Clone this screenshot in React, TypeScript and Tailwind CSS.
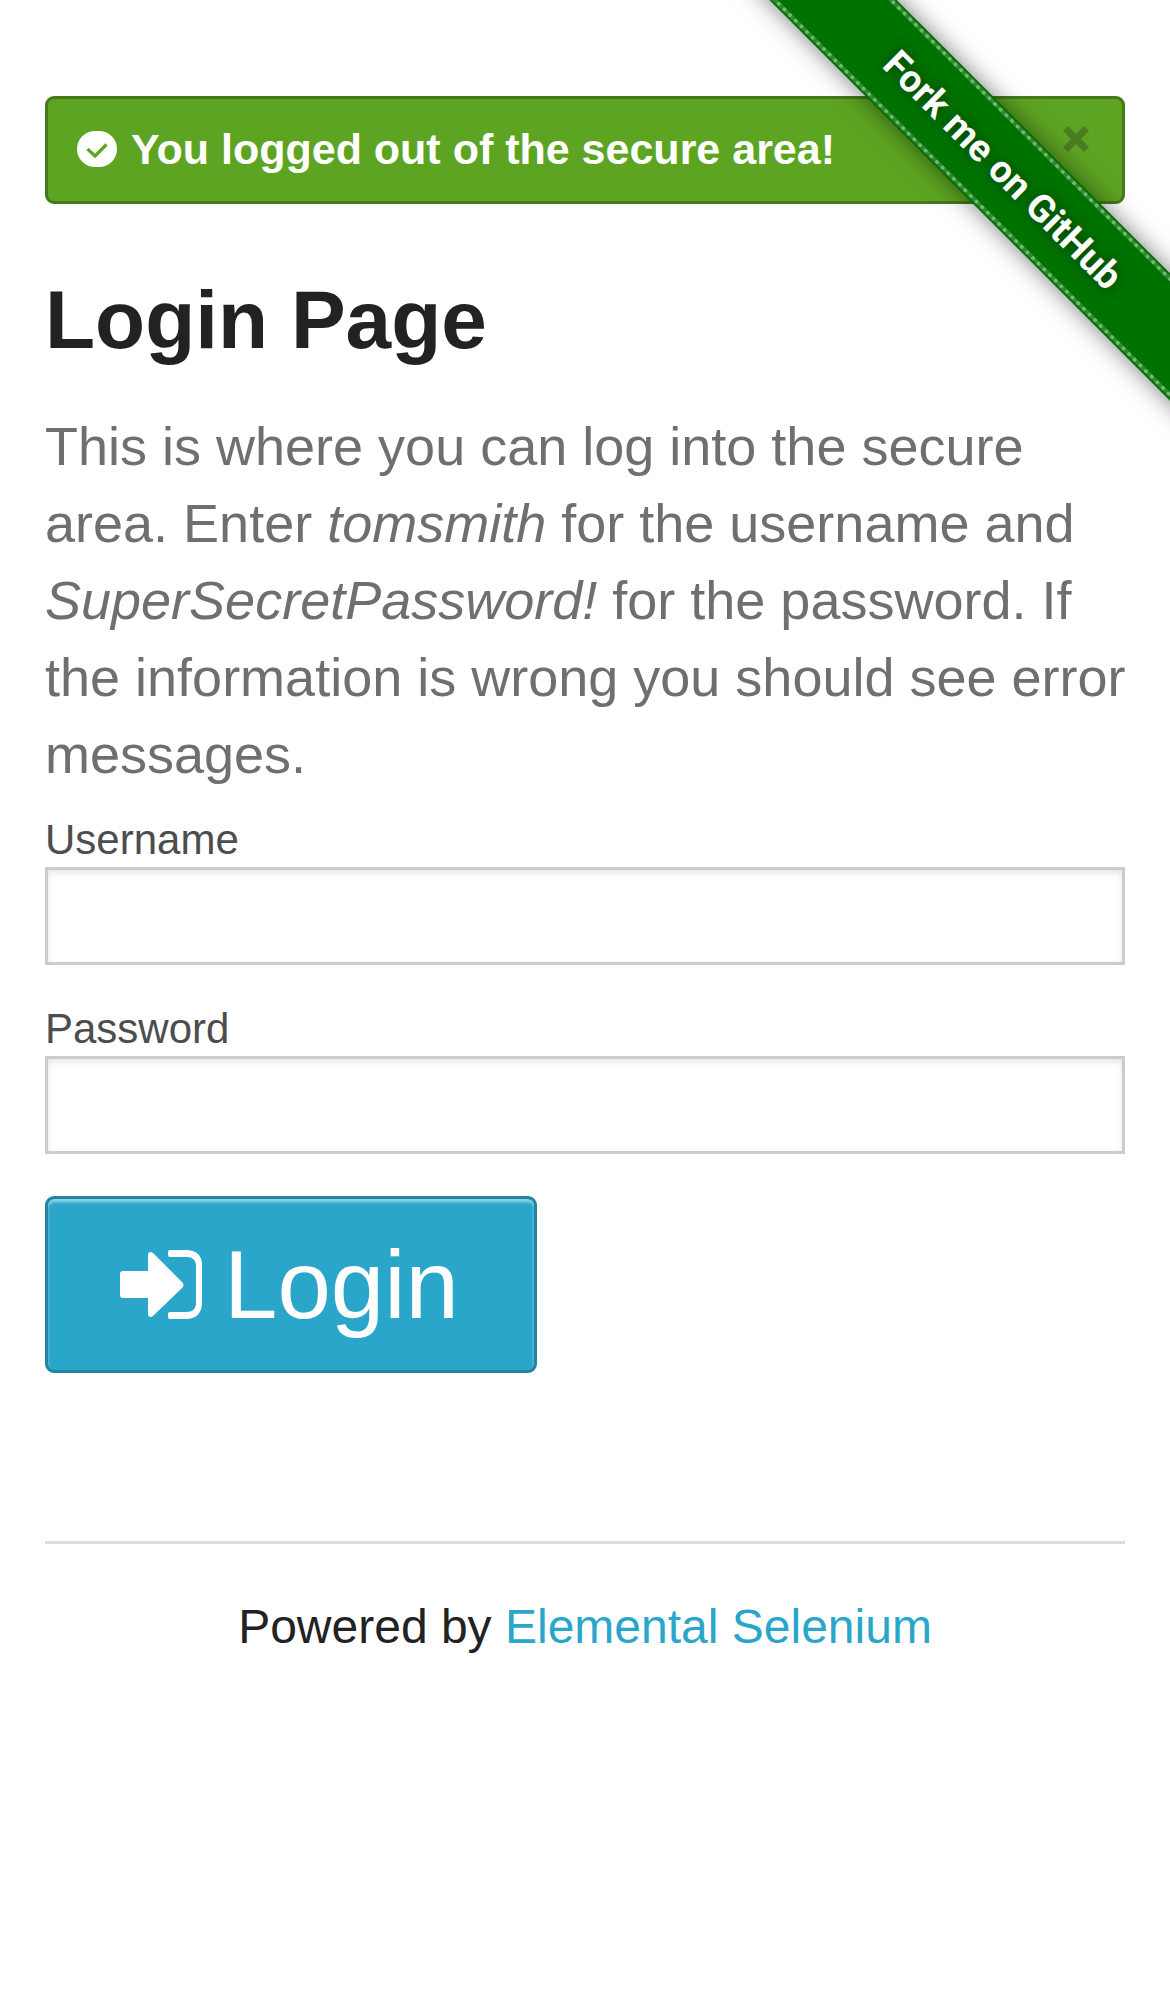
function Ribbon() {
  return (
    <div className="pointer-events-none absolute top-0 right-0 z-10 size-[447px] overflow-hidden">
      <a
        href="https://github.com/tourdedave/the-internet"
        className="pointer-events-auto absolute top-[125px] -right-[143px] flex h-[90px] w-[620px] rotate-45 items-center bg-[#007200] py-[2px] shadow-[0_0_24px_rgba(0,0,0,0.5)]"
      >
        <span className="block h-full w-full border-y-4 border-dotted border-[#74b474] bg-[#2d8a2d]">
          <span className="flex h-full w-full items-center justify-center bg-[#007200] bg-clip-padding font-[Roboto,sans-serif] text-[38px] font-bold text-white [text-shadow:0_0_12px_rgba(0,0,0,0.5)]">
            Fork me on GitHub
          </span>
        </span>
      </a>
    </div>
  );
}

function CheckIcon() {
  return (
    <svg viewBox="0 0 40 36" className="mr-[14px] h-9 w-10" aria-hidden="true">
      <rect width="40" height="36" rx="18" fill="#fff" />
      <path d="M10.5 18L18 25L29.5 13.5" fill="none" stroke="#5da423" strokeWidth="3.2" />
    </svg>
  );
}

function SignInIcon() {
  return (
    <svg viewBox="0 0 82 69" className="h-[69px] w-[82px]" fill="currentColor" aria-hidden="true">
      <path d="M3 21H28V5Q28 2 31 2Q32 2 34 4L62 32Q65 35 62 38L34 65Q32 67 31 67Q28 67 28 64V48H3Q0 48 0 45V24Q0 21 3 21Z" />
      <path d="M50 0H67Q82 1 82 15V54Q81 68 67 69H50Q48 69 48 67V64Q48 62 50 62H67Q75 62 76 54V15Q75 7 67 7H50Q48 7 48 5V2Q48 0 50 0Z" />
    </svg>
  );
}

function Field({ id, label, type }: { id: string; label: string; type: string }) {
  return (
    <div className="mb-[42px]">
      <label htmlFor={id} className="block pb-[6px] text-[42px] leading-[43px] text-[#4d4d4d]">
        {label}
      </label>
      <input
        id={id}
        name={id}
        type={type}
        className="block h-[98px] w-full border-3 border-[#ccc] bg-white px-6 text-[42px] text-black/75 shadow-[inset_0_3px_6px_rgba(0,0,0,0.1)] outline-none"
      />
    </div>
  );
}

export default function App() {
  return (
    <div className="relative min-h-screen bg-white px-[45px] pt-24 font-['Liberation_Sans',Arial,sans-serif] text-[#222]">
      <Ribbon />
      <div
        role="alert"
        className="flex h-[108px] items-center rounded-[9px] border-3 border-[#457a1a] bg-[#5da423] pr-[33px] pb-[2px] pl-[29px] text-[43px] font-bold text-white"
      >
        <CheckIcon />
        <span className="flex-1">You logged out of the secure area!</span>
        <button type="button" aria-label="Close" className="mb-5 text-[#222]/30">
          <svg viewBox="0 0 26 26" className="size-[26px]" stroke="currentColor" strokeWidth="7" aria-hidden="true">
            <path d="M2.5 2.5L23.5 23.5M23.5 2.5L2.5 23.5" />
          </svg>
        </button>
      </div>
      <main>
        <h2 className="mt-[60px] text-[82px] leading-[112px] font-bold">Login Page</h2>
        <h4 className="mt-8 -mr-2 text-[54px] leading-[77px] text-[#6f6f6f]">
          This is where you can log into the secure area. Enter <em>tomsmith</em> for the username and{" "}
          <em>SuperSecretPassword!</em> for the password. If the information is wrong you should see error messages.
        </h4>
        <form className="mt-[25px]" onSubmit={(e) => e.preventDefault()}>
          <Field id="username" label="Username" type="text" />
          <Field id="password" label="Password" type="password" />
          <button
            type="submit"
            className="flex h-[177px] items-center gap-[22px] rounded-[9px] border-3 border-[#2284a1] bg-[#2ba6cb] pr-[75px] pl-[72px] text-[96px] text-white shadow-[inset_0_3px_3px_rgba(255,255,255,0.5)]"
          >
            <SignInIcon />
            Login
          </button>
        </form>
      </main>
      <footer className="mt-[168px] border-t-3 border-[#ddd] pt-[47px] text-center text-[48px] leading-[72px]">
        Powered by{" "}
        <a href="http://elementalselenium.com/" className="text-[#2ba6cb]">
          Elemental Selenium
        </a>
      </footer>
    </div>
  );
}
